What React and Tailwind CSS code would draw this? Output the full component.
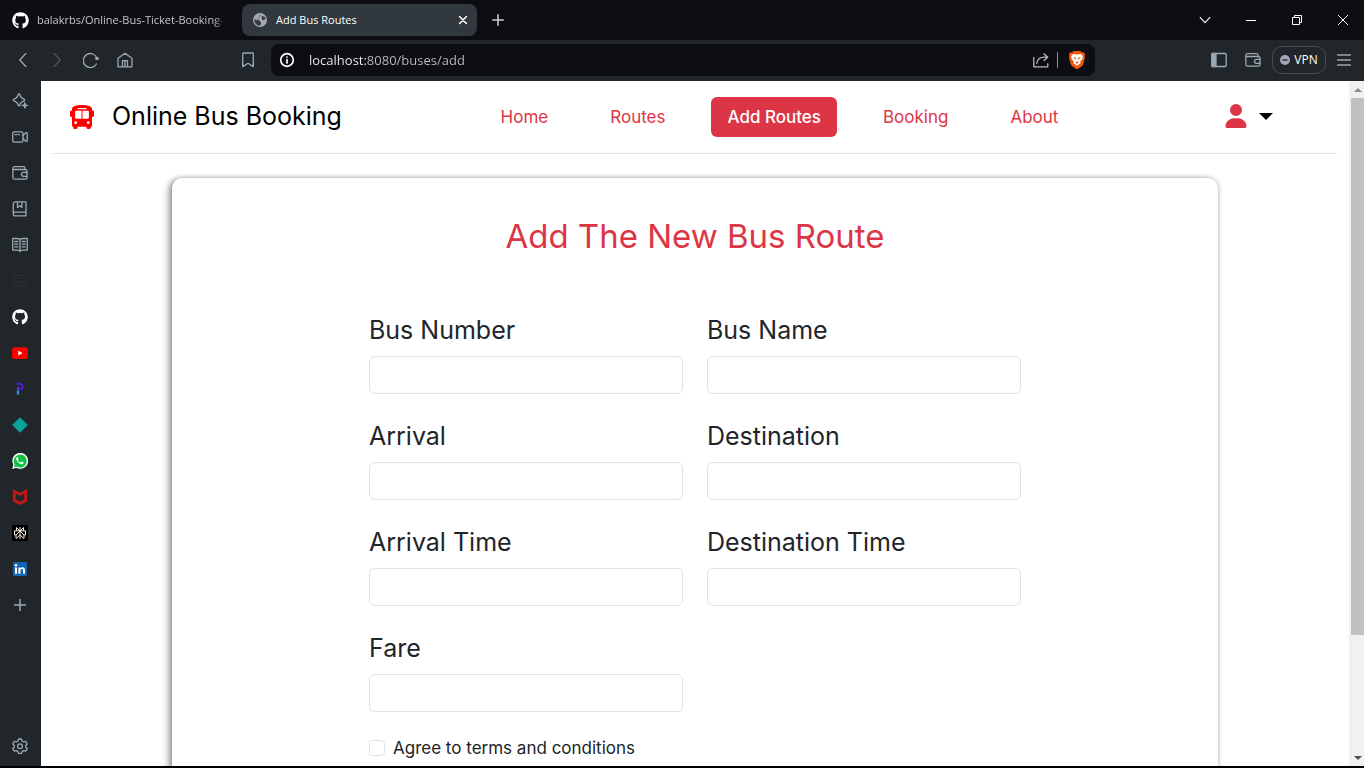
import React from "react";
import { FaUser, FaGithub } from "react-icons/fa6";

const ink = { fill: "none", stroke: "currentColor", strokeLinecap: "round", strokeLinejoin: "round" };

function Icon({ size = 16, width = 1.1, children, className = "" }) {
  return (
    <svg viewBox="0 0 16 16" width={size} height={size} strokeWidth={width} {...ink} className={className} aria-hidden="true">
      {children}
    </svg>
  );
}

const WalletShape = () => (
  <>
    <path d="M13 4.5V3a1.3 1.3 0 0 0-1.3-1.3H2.4A1.5 1.5 0 0 0 .9 3.2v9.3A1.7 1.7 0 0 0 2.6 14.200h10.700a1.700 1.700 0 0 0 1.700-1.700V6a1.500 1.500 0 0 0-1.500-1.500H2.300A1.400 1.400 0 0 1 .9 3.200" />
    <path d="M15 7.300h-3.500a2 2 0 0 0 0 4H15" />
  </>
);

const sideItems = [
  {
    label: "Leo AI",
    icon: (
      <Icon width={1.3}>
        <path d="M7 1c.4 0 .7.300.800.700.6 2.400 1.500 3.700 4.200 4.400.9.200.9 1.500 0 1.700-2.700.7-3.600 1.900-4.200 4.400-.2.900-1.400.9-1.600 0C5.600 9.700 4.700 8.500 2 7.800 1 7.600 1 6.300 2 6.100c2.700-.7 3.600-2 4.200-4.400C6.300 1.300 6.600 1 7 1z" />
        <path d="M12.800 10.200v4.400M10.600 12.400H15" strokeWidth="1.700" />
      </Icon>
    ),
  },
  {
    label: "Brave Talk",
    icon: (
      <Icon width={1.3}>
        <rect x="0.700" y="2.800" width="10.300" height="10.400" rx="1.700" />
        <path d="M11 6.500l2.800-2.700c.5-.4 1.400-.2 1.400.5v7.400c0 .7-.9.900-1.400.5L11 9.500M3 5.700h1.300M6 5.700h1.300" />
      </Icon>
    ),
  },
  { label: "Wallet", icon: <Icon width={1.3}><WalletShape /></Icon> },
  {
    label: "Bookmarks",
    icon: (
      <Icon width={1.3}>
        <path d="M3 .8h11v14H3.200a1.900 1.900 0 0 1-1.900-1.900V2.600A1.800 1.800 0 0 1 3 .8zM1.300 12.900c0-1.100.8-1.800 1.900-1.800H14M5.500.8v5.600l2.200-1.600 2.200 1.600V.8" />
      </Icon>
    ),
  },
  {
    label: "Reading list",
    icon: (
      <Icon width={1.3}>
        <path d="M8 2.500C7 1.700 6 1.500 4.800 1.500H.7v11.600h4.600c1.200 0 2 .3 2.700 1.400.7-1.100 1.500-1.400 2.700-1.400h4.600V1.500h-4.100C10 1.500 9 1.700 8 2.500zM8 2.500v12" />
        <path d="M2.800 4.500h3M2.800 7.200h3M2.800 9.900h3M10.200 4.500h3M10.200 7.200h3M10.200 9.900h3" />
      </Icon>
    ),
  },
  {
    label: "Panel",
    icon: (
      <Icon className="text-[#2a3034]">
        <rect x="0.800" y="2.500" width="14.400" height="11" rx="1" />
        <path d="M3 5.500h4M3 9h10" />
      </Icon>
    ),
  },
  { label: "GitHub", icon: <FaGithub className="size-4 text-white" /> },
  {
    label: "YouTube",
    icon: (
      <svg viewBox="0 0 16 16" className="size-4" aria-hidden="true">
        <rect x="0" y="2.300" width="16" height="11.600" rx="2.600" fill="#f00" />
        <path d="M6.300 5.700v4.800L10.500 8.100z" fill="#fff" />
      </svg>
    ),
  },
  {
    label: "Playground",
    icon: (
      <svg viewBox="0 0 16 16" className="size-4" aria-hidden="true" fill="none">
        <path d="M4.500 3C7 2.200 10.800 2.900 11 5.400 11.100 7.400 9 8.400 7.600 8.300" stroke="#4b1fd0" strokeWidth="2" />
        <path d="M7.200 6.300C6 6.700 5.700 7.600 5.700 9" stroke="#7d3cf5" strokeWidth="1.800" />
        <path d="M6 9.500v4" stroke="#2f8ff0" strokeWidth="2.400" />
      </svg>
    ),
  },
  {
    label: "Diamond",
    icon: (
      <svg viewBox="0 0 16 16" className="size-4" aria-hidden="true">
        <path d="M8 .7L15.300 8 8 15.300.7 8z" fill="#0aa49c" stroke="#0aa49c" strokeLinejoin="round" />
      </svg>
    ),
  },
  {
    label: "WhatsApp",
    icon: (
      <svg viewBox="0 0 16 16" className="size-4" aria-hidden="true">
        <path d="M.2 15.900l1.100-4.200A7.900 7.900 0 1 1 4.400 14.800z" fill="#fff" />
        <path d="M2 14.200l.7-2.700a6.500 6.500 0 1 1 2.300 2.200z" fill="#12c143" />
        <path d="M5.700 4.300c-.3-.3-.7-.2-.9 0-.9.900-.8 2.100 0 3.300 1 1.600 2.300 2.900 4 3.500 1.300.5 2.300 0 2.700-.9.200-.5.100-.9-.2-1l-1.400-.7c-.3-.1-.5 0-.7.2l-.5.6c-.2.2-.4.200-.6.100C7 8.900 6.300 8.200 5.900 7.400c-.1-.2 0-.4.100-.5.4-.4.600-.7.500-1z" fill="#fff" />
      </svg>
    ),
  },
  {
    label: "McAfee",
    icon: (
      <svg viewBox="0 0 16 16" className="size-4" aria-hidden="true">
        <path d="M.8 0L8 3.700 15.200 0v12.500L8 16 .8 12.500zM3.800 4.600v6L8 12.800l4.200-2.200v-6L8 6.900z" fill="#c01818" fillRule="evenodd" />
      </svg>
    ),
  },
  {
    label: "Perplexity",
    icon: (
      <svg viewBox="0 0 16 16" className="size-4" aria-hidden="true" fill="none" stroke="#f0e9dc">
        <rect width="16" height="16" rx="1" fill="#000" stroke="none" />
        <path d="M8 2v12M4.500 2.500L8 6l3.500-3.500v3.300M4.500 2.500v3.300M2.500 10V5.800h11V10M8 6l-4 4v3.500L8 10l4 3.500V10L8 6M2.500 10H4M12 10h1.500" />
      </svg>
    ),
  },
  {
    label: "LinkedIn",
    icon: (
      <svg viewBox="0 0 16 16" className="size-4" aria-hidden="true">
        <rect x="1" y="1" width="14" height="14" rx="1" fill="#1464b8" />
        <path d="M3 6.400h2v6.400H3zM6.400 6.400h2v.9c.4-.7 1.100-1.100 2-1.100 1.900 0 2.600 1.100 2.600 3v3.600h-2V9.500c0-.9-.2-1.600-1.200-1.600-1 0-1.300.7-1.300 1.600v3.300H6.400z" fill="#fff" />
        <circle cx="4" cy="4.200" r="1.200" fill="#fff" />
      </svg>
    ),
  },
  { label: "Add to sidebar", icon: <Icon width={1.500}><path d="M8 2.500v11M2.500 8h11" /></Icon> },
];

function TabStrip() {
  return (
    <header className="flex h-10 shrink-0 items-center bg-[#0d0e13] text-white">
      <button type="button" className="flex h-8 w-[230px] items-center gap-2 pl-3">
        <FaGithub className="size-[17px] shrink-0" />
        <span className="mask-r-from-95% text-[11px] whitespace-nowrap text-[#c3c5c9]">
          balakrbs/Online-Bus-Ticket-Booking-
        </span>
      </button>
      <div className="ml-3 flex h-8 w-[235px] items-center rounded-lg bg-[#31393e] pr-[7px] pl-[11px]">
        <svg viewBox="0 0 16 16" className="size-[14px]" aria-hidden="true">
          <circle cx="8" cy="8" r="8" fill="#a5aab2" />
          <path d="M9.500 1.300c-.2 1.300-1.600.8-2.200 1.700-.5.9.6 1.800-.2 2.600C6.300 6.400 5 5.700 4.600 7c-.3 1 1.200.9 2.200 1.200 1.300.4 1 1.600 2.100 2 .8.300.3 2.200-.9 4.300A6.500 6.500 0 0 1 1.600 7L5 8.500M10 3.500l3.300.7 1 2.500-2 1.600-2.400-.9z" fill="#31393e" />
        </svg>
        <span className="ml-[9px] grow text-[11px]">Add Bus Routes</span>
        <button type="button" aria-label="Close tab" className="p-0.5">
          <Icon size={10} width={2.400}><path d="M2.500 2.500l11 11M13.500 2.500l-11 11" /></Icon>
        </button>
      </div>
      <button type="button" aria-label="New tab" className="ml-[14px] text-[#c9ccd0]">
        <Icon size={14} width={1.800}><path d="M8 2v12M2 8h12" /></Icon>
      </button>
      <div className="-mr-0.5 ml-auto flex items-center">
        <button type="button" aria-label="Search tabs" className="grid w-[46px] place-items-center">
          <Icon size={12} width={1.400}><path d="M1.500 4.500L8 11.500l6.500-7" /></Icon>
        </button>
        <button type="button" aria-label="Minimize" className="grid w-[46px] place-items-center">
          <svg viewBox="0 0 10 10" className="size-[10px]" aria-hidden="true"><path d="M0 5.500h10" stroke="#fff" /></svg>
        </button>
        <button type="button" aria-label="Restore" className="grid w-[46px] place-items-center">
          <svg viewBox="0 0 10 10" className="size-[10px]" fill="none" stroke="#fff" aria-hidden="true">
            <path d="M.5 2.500h7v7h-7zM2.500 2.500v-2h7v7h-2" />
          </svg>
        </button>
        <button type="button" aria-label="Close" className="grid w-[46px] place-items-center">
          <svg viewBox="0 0 10 10" className="size-[10px]" stroke="#fff" aria-hidden="true"><path d="M0 0l10 10M10 0L0 10" /></svg>
        </button>
      </div>
    </header>
  );
}

function Toolbar() {
  return (
    <div className="flex h-[41px] shrink-0 items-center bg-[#20262a] pb-px text-[#9aa9b3]">
      <div className="flex w-[133px] items-center justify-between pl-[15px]">
        <button type="button" aria-label="Back"><Icon width={1.3}><path d="M10.800 1.500L4.800 8l6 6.500" /></Icon></button>
        <button type="button" aria-label="Forward" className="text-[#4d565c]"><Icon width={1.3}><path d="M5.200 1.500l6 6.500-6 6.500" /></Icon></button>
        <button type="button" aria-label="Reload">
          <Icon width={1.3}>
            <path d="M14 6.500A7 7 0 1 0 13.400 12" />
            <circle cx="14" cy="6.500" r="1.800" fill="currentColor" stroke="none" />
          </Icon>
        </button>
        <button type="button" aria-label="Home">
          <Icon width={1.3}><path d="M1 6.200L8 1.200l7 5V14.800H1zM5.500 14.500V8.700h5v5.800M8 9v5.500" /></Icon>
        </button>
      </div>
      <button type="button" aria-label="Bookmark" className="ml-[107px] w-[31px] shrink-0">
        <Icon width={1.3}><path d="M3.300 1h9.400c.3 0 .6.300.6.600v13L8 11.300l-5.300 3.300v-13c0-.3.300-.6.600-.6z" /></Icon>
      </button>
      <div className="mr-[116px] flex h-8 min-w-0 grow items-center rounded-lg bg-[#0d0e13] pr-[9px] pl-2">
        <Icon className="text-white" width={1.700}>
          <circle cx="8" cy="8" r="6.300" />
          <path d="M8 7.500v3.500M8 5v.1" />
        </Icon>
        <input
          type="text"
          aria-label="Address"
          defaultValue="localhost:8080/buses/add"
          className="ml-[14px] h-6 min-w-0 grow bg-linear-to-r from-[#f4f4f5] from-[56px] to-[#b9bcc0] to-[57px] bg-clip-text text-[13px] text-transparent outline-none"
        />
        <button type="button" aria-label="Share" className="text-[#b4b7bb]">
          <Icon width={1.300}><path d="M.8 5.500v9.300h14v-3M3.800 11.500c.5-4.500 3.500-6.300 7.500-6.300h3M11 1.800l3.700 3.400L11 8.600" /></Icon>
        </button>
        <span className="ml-2 h-4 w-px bg-[#8b8e93]" />
        <button type="button" aria-label="Brave Shields" className="ml-[10px]">
          <svg viewBox="0 0 18 20" className="h-[20px] w-[18px]" aria-hidden="true">
            <path d="M5.500 1h7l1.400 1.500 1.800-.2 1.500 2-.6 1.700.4 1.400-2 7.400c-.3 1-2.200 2.200-5.100 4.200h-1.800C5.200 17 3.300 15.800 3 14.800L1 7.400 1.400 6 .8 4.300l1.500-2 1.800.2z" fill="#f1580f" />
            <path d="M5 4l4 .6L13 4l2 2.300-.6 1.400.3.900-2.500 3.200.3 1.500L9 15.800l-3.500-2.500.3-1.500-2.500-3.200.3-.9L3 6.300z" fill="#fff" />
            <path d="M5 7.200l3 .6-.3 2zM13 7.200l-3 .6.300 2zM7 12.500l2-1 2 1-2 1.300z" fill="#f1580f" />
          </svg>
        </button>
      </div>
      <div className="flex items-center pr-3">
        <button type="button" aria-label="Toggle sidebar">
          <Icon width={1.3}><rect x="0.800" y="1.500" width="14.400" height="13" rx="1" /><path d="M1 1.500h4v13H1z" fill="currentColor" /></Icon>
        </button>
        <button type="button" aria-label="Wallet" className="ml-[18px]"><Icon width={1.3}><WalletShape /></Icon></button>
        <button type="button" className="ml-[11px] flex h-7 w-[54px] items-center justify-center gap-1 rounded-[10px] border border-[#474e53] text-[12px] text-white">
          <svg viewBox="0 0 10 10" className="size-[10px]" aria-hidden="true">
            <circle cx="5" cy="5" r="5" fill="#a3a5bb" /><path d="M2.500 5h5" stroke="#20262a" strokeWidth="1.400" />
          </svg>
          VPN
        </button>
        <button type="button" aria-label="Menu" className="ml-[10px]">
          <Icon width={1.3}><path d="M1.500 3h13M1.500 8h13M1.500 13h13" /></Icon>
        </button>
      </div>
    </div>
  );
}

function Sidebar() {
  return (
    <aside className="flex w-[41px] shrink-0 flex-col bg-[#20262a] pt-0.5 pr-px text-[#9aa9b3]">
      {sideItems.map((item) => (
        <button key={item.label} type="button" aria-label={item.label} className="grid h-9 w-full shrink-0 place-items-center">
          {item.icon}
        </button>
      ))}
      <button type="button" aria-label="Settings" className="mt-auto grid h-10 w-full place-items-center">
        <Icon width={1.3}>
          <path d="M6.500 1h3l.5 2 1.700 1 2-.6 1.500 2.600L13.700 7.400v1.800l1.500 1.400-1.500 2.600-2-.6-1.700 1-.5 1.900h-3L6 13.600l-1.700-1-2 .6L.8 10.600l1.500-1.400V7.400L.8 6l1.500-2.600 2 .6L6 3z" />
          <circle cx="8" cy="8.200" r="2.400" />
        </Icon>
      </button>
    </aside>
  );
}

function BusIcon() {
  return (
    <svg viewBox="0 0 24 24" className="size-6 shrink-0" fill="#f00" aria-hidden="true">
      <path
        fillRule="evenodd"
        d="M12 0c5.500 0 10 1.300 10 4v1.500h.6c.8 0 1.400.6 1.400 1.400v3.700c0 .8-.6 1.400-1.400 1.400H22v8.400c0 .7-.5 1.300-1.200 1.300v1.100c0 .7-.5 1.200-1.200 1.200h-1.900c-.7 0-1.200-.5-1.200-1.200v-1.100h-9v1.100c0 .7-.5 1.200-1.200 1.200H4.400c-.7 0-1.200-.5-1.200-1.200v-1.100C2.500 21.700 2 21.100 2 20.400V12h-.6C.6 12 0 11.400 0 10.600V6.900c0-.8.6-1.400 1.400-1.400H2V4c0-2.700 4.500-4 10-4zM8 3.100a.6.600 0 0 0 0 1.200h8a.6.600 0 0 0 0-1.200zM6.300 5.700c-.7 0-1.200.5-1.200 1.200v5.700c0 .7.500 1.200 1.200 1.200h5.200V5.700zM12.500 5.700v8.100h5.200c.7 0 1.200-.5 1.200-1.200V6.900c0-.7-.5-1.200-1.200-1.200zM5.700 16.300a1.400 1.400 0 1 0 0 2.800 1.400 1.400 0 0 0 0-2.800zM18.300 16.300a1.400 1.400 0 1 0 0 2.800 1.400 1.400 0 0 0 0-2.800z"
      />
    </svg>
  );
}

const links = ["Home", "Routes", "Add Routes", "Booking", "About"];

function Navbar() {
  return (
    <nav className="mx-3 flex h-[73px] items-center justify-between border-b border-[#dee2e6] pr-16 pl-[17px]">
      <a href="#home" className="flex w-[264px] items-center gap-[18px] text-[25px] whitespace-nowrap text-black">
        <BusIcon />
        Online Bus Booking
      </a>
      <ul className="flex gap-[30px] text-[17px] leading-6">
        {links.map((name) => (
          <li key={name}>
            <a
              href={"#" + name.toLowerCase().replace(" ", "-")}
              className={name === "Add Routes" ? "block rounded-md bg-[#dc3545] px-4 py-2 font-medium text-white" : "block px-4 py-2 text-[#dc3545]"}
            >
              {name}
            </a>
          </li>
        ))}
      </ul>
      <button type="button" aria-label="Account" className="flex items-center gap-3 pb-0.5">
        <FaUser className="h-6 w-[22px] text-[#dc3545]" />
        <svg viewBox="0 0 14 7" className="h-[7px] w-[14px]" aria-hidden="true"><path d="M0 0h14L7 7z" /></svg>
      </button>
    </nav>
  );
}

const fields = ["Bus Number", "Bus Name", "Arrival", "Destination", "Arrival Time", "Destination Time", "Fare"];

function RouteForm() {
  return (
    <section className="mx-auto mt-6 w-4/5 rounded-[10px] bg-white pt-[38px] pb-16 shadow-[0_0_5px_rgba(0,0,0,0.3),-4px_2px_6px_rgba(0,0,0,0.3)]">
      <h1 className="text-center text-[33px] leading-10 text-[#dc3545]">Add The New Bus Route</h1>
      <form className="mx-auto mt-14 w-[652px] text-[#212529]">
        <div className="grid grid-cols-2 gap-6">
          {fields.map((name) => {
            const id = name.toLowerCase().replace(" ", "-");
            return (
              <div key={id}>
                <label htmlFor={id} className="mb-2 block text-[25px] leading-9">{name}</label>
                <input id={id} type="text" className="block h-[38px] w-full rounded-md border border-[#dee2e6] bg-white px-3" />
              </div>
            );
          })}
        </div>
        <div className="mt-6 flex items-center gap-2">
          <input id="agree" type="checkbox" className="size-4 appearance-none rounded-sm border border-[#dee2e6] bg-white" />
          <label htmlFor="agree" className="text-[17px] leading-6">Agree to terms and conditions</label>
        </div>
      </form>
    </section>
  );
}

function Scrollbar() {
  return (
    <div className="flex w-[15px] shrink-0 flex-col items-center bg-[#f1f1f1] pl-0.5" aria-hidden="true">
      <div className="grid h-[17px] place-items-center">
        <svg viewBox="0 0 8 4" className="h-1 w-2"><path d="M0 4h8L4 0z" fill="#8b8b8b" /></svg>
      </div>
      <div className="w-full grow-[537] bg-[#c1c1c1]" />
      <div className="grow-[114]" />
      <div className="grid h-[17px] place-items-center">
        <svg viewBox="0 0 8 4" className="h-1 w-2"><path d="M0 0h8L4 4z" fill="#505050" /></svg>
      </div>
    </div>
  );
}

export default function App() {
  return (
    <div className="flex h-screen flex-col overflow-hidden border-b-2 border-black bg-white font-['Open_Sans',sans-serif]">
      <TabStrip />
      <Toolbar />
      <div className="flex min-h-0 grow">
        <Sidebar />
        <main className="min-w-0 grow overflow-hidden bg-white font-['Inter',sans-serif]">
          <Navbar />
          <RouteForm />
        </main>
        <Scrollbar />
      </div>
    </div>
  );
}
